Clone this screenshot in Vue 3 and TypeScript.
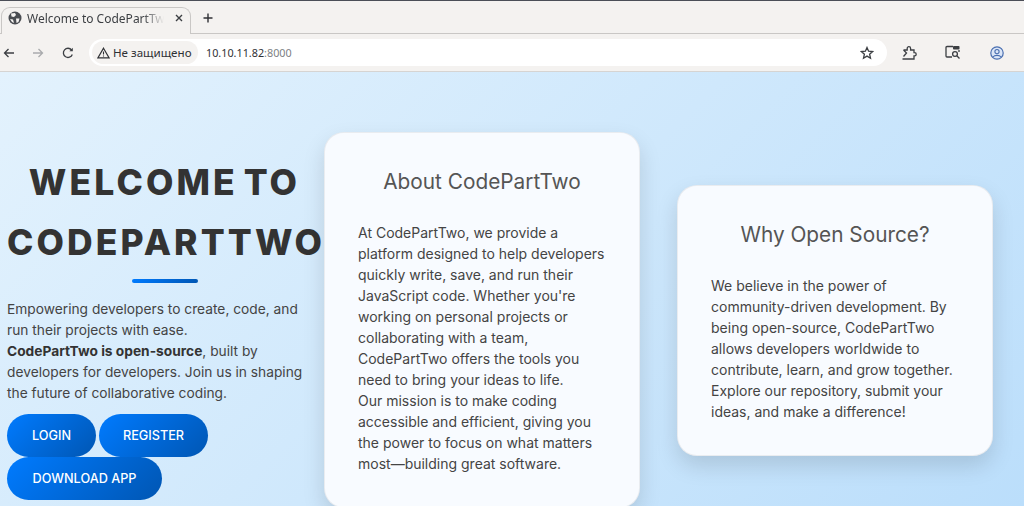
<script setup lang="ts">
const about: string[] = [
  'At CodePartTwo, we provide a',
  'platform designed to help developers',
  'quickly write, save, and run their',
  "JavaScript code. Whether you're",
  'working on personal projects or',
  'collaborating with a team,',
  'CodePartTwo offers the tools you',
  'need to bring your ideas to life.',
  'Our mission is to make coding',
  'accessible and efficient, giving you',
  'the power to focus on what matters',
  'most—building great software.',
]
const why: string[] = [
  'We believe in the power of',
  'community-driven development. By',
  'being open-source, CodePartTwo',
  'allows developers worldwide to',
  'contribute, learn, and grow together.',
  'Explore our repository, submit your',
  'ideas, and make a difference!',
]
</script>

<template>
  <div class="window">
    <header class="chrome">
      <div class="tabstrip">
        <div class="tab">
          <svg class="globe" width="14" height="14" viewBox="0 0 14 14">
            <circle cx="7" cy="7" r="6.5" fill="#4a4d52" />
            <path d="M3 2.5 L7 2 L8 4 L6 6 L3.5 5.5 Z M8 7.5 L11.5 7.5 L10.5 11 L8.5 12 Z M2 8 L5 8.5 L6 12 L4 11 Z" fill="#f5f3f1" />
          </svg>
          <span class="tabtitle">Welcome to CodePartTw</span>
          <svg class="close" width="8" height="8" viewBox="0 0 8 8">
            <path d="M1 1 L7 7 M7 1 L1 7" stroke="#3c3f43" stroke-width="1.4" />
          </svg>
        </div>
        <svg class="plus" width="10" height="10" viewBox="0 0 10 10">
          <path d="M5 0.5 V9.5 M0.5 5 H9.5" stroke="#2f3135" stroke-width="1.4" />
        </svg>
      </div>
      <div class="toolbar">
        <svg class="nav" width="12" height="12" viewBox="0 0 12 12">
          <path d="M11 6 H1.5 M5.5 2 L1.5 6 L5.5 10" fill="none" stroke="#3c3f43" stroke-width="1.3" />
        </svg>
        <svg class="nav fwd" width="12" height="12" viewBox="0 0 12 12">
          <path d="M1 6 H10.5 M6.5 2 L10.5 6 L6.5 10" fill="none" stroke="#a9abad" stroke-width="1.3" />
        </svg>
        <svg class="nav reload" width="12" height="12" viewBox="0 0 12 12">
          <path d="M10.3 7.5 A4.6 4.6 0 1 1 9.6 3" fill="none" stroke="#3c3f43" stroke-width="1.3" />
          <path d="M10.8 0.8 V4.2 H7.4 Z" fill="#3c3f43" />
        </svg>
        <div class="omnibox">
          <div class="security">
            <svg width="13" height="12" viewBox="0 0 13 12">
              <path d="M6.5 1.2 L12 10.8 H1 Z" fill="none" stroke="#2f3135" stroke-width="1.2" />
              <path d="M6.5 4.6 V7.6 M6.5 8.4 V9.6" stroke="#2f3135" stroke-width="1.1" />
            </svg>
            <span>Не защищено</span>
          </div>
          <span class="url">10.10.11.82<span class="port">:8000</span></span>
          <svg class="star" width="14" height="14" viewBox="0 0 14 14">
            <path d="M7 1.5 L8.6 5.2 L12.6 5.6 L9.6 8.2 L10.5 12.2 L7 10.1 L3.5 12.2 L4.4 8.2 L1.4 5.6 L5.4 5.2 Z" fill="none" stroke="#3c3f43" stroke-width="1.3" />
          </svg>
        </div>
        <svg class="ext" width="16" height="16" viewBox="0 0 16 16">
          <path d="M2.5 5 H6.2 V3.4 A1.7 1.7 0 0 1 9.6 3.4 V5 H13 V7.6 H13.6 A1.6 1.6 0 0 1 13.6 10.8 H13 V14 H4 M2.5 5 L5.5 8 L2.5 11.5 M1.5 14 H5" fill="none" stroke="#3c3f43" stroke-width="1.3" />
        </svg>
        <svg class="lens" width="16" height="15" viewBox="0 0 16 15">
          <path d="M7 12 H2 A1 1 0 0 1 1 11 V2.5 A1 1 0 0 1 2 1.5 H8" fill="none" stroke="#3c3f43" stroke-width="1.3" />
          <rect x="8" y="1" width="6.5" height="3.5" rx="0.8" fill="#3c3f43" />
          <circle cx="10" cy="9" r="2.4" fill="none" stroke="#3c3f43" stroke-width="1.3" />
          <path d="M11.8 10.8 L14.5 13.5" stroke="#3c3f43" stroke-width="1.3" />
          <path d="M14 5 V7" stroke="#3c3f43" stroke-width="1.3" />
        </svg>
        <svg class="avatar" width="14" height="14" viewBox="0 0 14 14">
          <circle cx="7" cy="7" r="6.2" fill="#dbe6f7" stroke="#4a6fb0" stroke-width="1.2" />
          <circle cx="7" cy="5.6" r="2.1" fill="none" stroke="#4a6fb0" stroke-width="1.1" />
          <path d="M3 11 C4.5 8.8 9.5 8.8 11 11" fill="none" stroke="#4a6fb0" stroke-width="1.1" />
        </svg>
      </div>
    </header>

    <main class="page">
      <div class="row">
        <section class="hero">
          <h1 class="headline">WELCOME TO<br />CODEPARTTWO</h1>
          <div class="rule"></div>
          <p class="lead">
            Empowering developers to create, code, and<br />run their projects with ease.<br /><strong>CodePartTwo is open-source</strong>, built by<br />developers for developers. Join us in shaping<br />the future of collaborative coding.
          </p>
          <div class="buttons">
            <a class="btn login">LOGIN</a>
            <a class="btn register">REGISTER</a>
            <a class="btn download">DOWNLOAD APP</a>
          </div>
        </section>

        <article class="card">
          <h2>About CodePartTwo</h2>
          <p><span v-for="line in about" :key="line" class="line">{{ line }}</span></p>
        </article>

        <article class="card">
          <h2>Why Open Source?</h2>
          <p><span v-for="line in why" :key="line" class="line">{{ line }}</span></p>
        </article>
      </div>
    </main>
  </div>
</template>

<style>
html, body { margin: 0; padding: 0; overflow: hidden; }
</style>

<style scoped>
.window {
  width: 1024px;
  height: 506px;
  overflow: hidden;
  display: flex;
  flex-direction: column;
  font-family: Inter, "Liberation Sans", sans-serif;
}
.chrome {
  height: 72px;
  flex: none;
  box-sizing: border-box;
  background: #f4f2f0;
  border-top: 1px solid #4b4e57;
  border-bottom: 1px solid #d6d4d2;
  font-family: "Noto Sans", sans-serif;
  color: #2f3135;
}
.tabstrip {
  height: 33px;
  box-sizing: border-box;
  border-bottom: 1px solid #c9c7c5;
  display: flex;
  align-items: flex-end;
  padding-left: 1px;
}
.tab {
  width: 190px;
  height: 27px;
  margin-bottom: -1px;
  box-sizing: border-box;
  background: #f4f2f0;
  border: 1px solid #c9c7c5;
  border-bottom: none;
  border-radius: 9px 9px 0 0;
  display: flex;
  align-items: center;
  padding: 0 0 6px 6px;
}
.tabtitle {
  font-size: 12px;
  margin-left: 5px;
  width: 137px;
  overflow: hidden;
  white-space: nowrap;
  color: #3c3f43;
  -webkit-mask-image: linear-gradient(to right, #000 85%, transparent);
  mask-image: linear-gradient(to right, #000 85%, transparent);
}
.close { margin-left: 11px; }
.plus { margin: 0 0 10px 12px; }
.toolbar {
  height: 37px;
  display: flex;
  align-items: center;
  padding-left: 3px;
}
.fwd { margin-left: 17px; }
.reload { margin-left: 18px; }
.omnibox {
  margin-left: 15px;
  width: 798px;
  height: 27px;
  background: #fff;
  border-radius: 14px;
  display: flex;
  align-items: center;
  padding-left: 3px;
  box-sizing: border-box;
}
.security {
  height: 23px;
  width: 106px;
  box-sizing: border-box;
  border-radius: 12px;
  background: #f4f2f0;
  display: flex;
  align-items: center;
  gap: 3px;
  padding-left: 5px;
  font-size: 11.6px;
  white-space: nowrap;
}
.url {
  margin-left: 8px;
  font-size: 10.8px;
  color: #2f3135;
}
.port { color: #7d7f83; }
.star { margin-left: auto; margin-right: 13px; }
.ext { margin-left: 14px; }
.lens { margin-left: 28px; }
.avatar { margin-left: 29px; }

.page {
  flex: 1;
  min-height: 0;
  overflow: hidden;
  background: linear-gradient(135deg, #e3f2fd, #bbdefb);
}
.row {
  height: 496px;
  display: flex;
  align-items: center;
  padding-left: 7px;
  gap: 37px;
}
.hero {
  width: 315px;
  margin-right: -35px;
  padding-top: 10px;
  flex: none;
  color: #444;
}
.headline {
  margin: 0;
  padding-top: 2px;
  font-size: 35.5px;
  line-height: 60px;
  font-weight: 800;
  letter-spacing: 3.1px;
  word-spacing: -5px;
  text-align: center;
  white-space: nowrap;
  color: #333;
}
.rule {
  width: 66px;
  height: 4px;
  border-radius: 2px;
  margin: 6px auto 16px;
  background: linear-gradient(135deg, #007bff, #0056b3);
}
.lead {
  margin: 0;
  font-size: 13.75px;
  line-height: 21px;
  white-space: nowrap;
}
.lead strong { font-weight: 700; color: #333; }
.buttons {
  margin-top: 10px;
  display: flex;
  flex-wrap: wrap;
  gap: 0 3px;
}
.btn {
  height: 43px;
  box-sizing: border-box;
  border-radius: 22px;
  display: flex;
  align-items: center;
  justify-content: center;
  color: #fff;
  font-size: 12.7px;
  font-weight: 500;
  background: linear-gradient(135deg, #007bff, #0056b3);
  white-space: nowrap;
}
.login { width: 89px; }
.register { width: 109px; }
.download { width: 155px; }
.card {
  width: 316px;
  flex: none;
  box-sizing: border-box;
  padding: 35px 33px 33px;
  background: #f8fbff;
  border: 1px solid rgba(0, 0, 0, 0.06);
  border-radius: 20px;
  box-shadow: 0 10px 22px rgba(0, 0, 0, 0.13);
}
.card h2 {
  margin: 0 0 26px;
  font-size: 20.8px;
  line-height: 28px;
  font-weight: 400;
  text-align: center;
  color: #555;
}
.card p {
  margin: 0;
  font-size: 14px;
  line-height: 21px;
  color: #444;
  white-space: nowrap;
}
.line { display: block; }
</style>
